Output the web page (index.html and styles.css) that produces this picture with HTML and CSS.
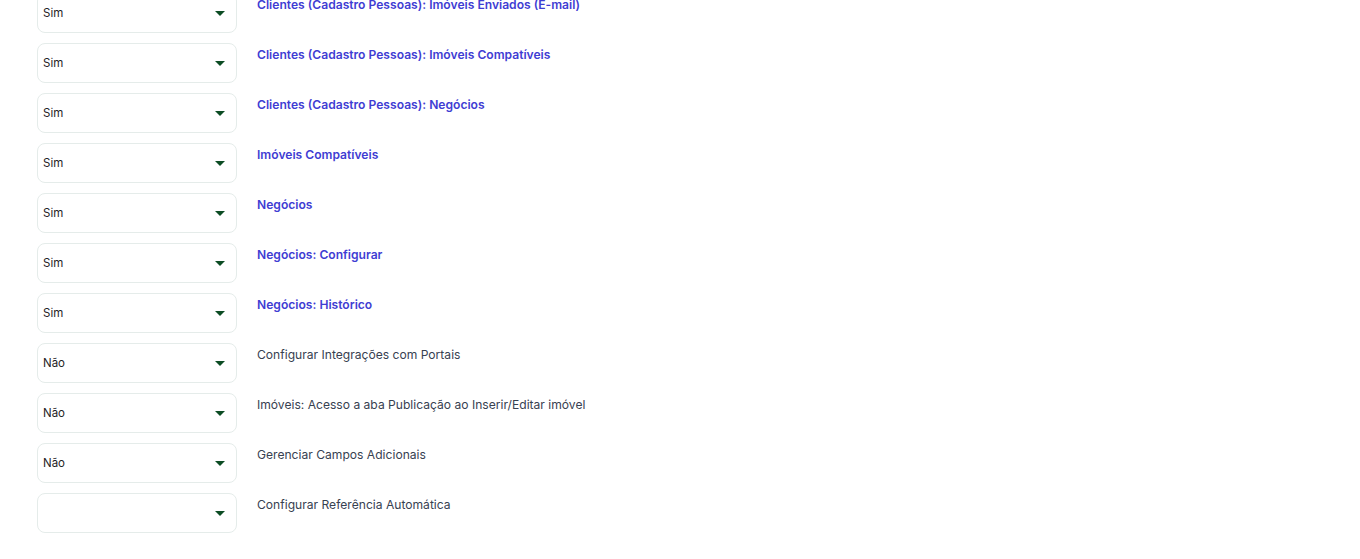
FILE: index.html
```html
<!DOCTYPE html>
<html lang="pt-BR">
<head>
<meta charset="utf-8">
<link rel="stylesheet" href="styles.css">
</head>
<body>
<div class="list">
  <div class="row"><div class="select"><span class="val">Sim</span><span class="caret"></span></div><div class="label on">Clientes (Cadastro Pessoas): Imóveis Enviados (E-mail)</div></div>
  <div class="row"><div class="select"><span class="val">Sim</span><span class="caret"></span></div><div class="label on">Clientes (Cadastro Pessoas): Imóveis Compatíveis</div></div>
  <div class="row"><div class="select"><span class="val">Sim</span><span class="caret"></span></div><div class="label on">Clientes (Cadastro Pessoas): Negócios</div></div>
  <div class="row"><div class="select"><span class="val">Sim</span><span class="caret"></span></div><div class="label on">Imóveis Compatíveis</div></div>
  <div class="row"><div class="select"><span class="val">Sim</span><span class="caret"></span></div><div class="label on">Negócios</div></div>
  <div class="row"><div class="select"><span class="val">Sim</span><span class="caret"></span></div><div class="label on">Negócios: Configurar</div></div>
  <div class="row"><div class="select"><span class="val">Sim</span><span class="caret"></span></div><div class="label on">Negócios: Histórico</div></div>
  <div class="row"><div class="select"><span class="val">Não</span><span class="caret"></span></div><div class="label">Configurar Integrações com Portais</div></div>
  <div class="row"><div class="select"><span class="val">Não</span><span class="caret"></span></div><div class="label">Imóveis: Acesso a aba Publicação ao Inserir/Editar imóvel</div></div>
  <div class="row"><div class="select"><span class="val">Não</span><span class="caret"></span></div><div class="label">Gerenciar Campos Adicionais</div></div>
  <div class="row"><div class="select"><span class="val"></span><span class="caret"></span></div><div class="label">Configurar Referência Automática</div></div>
</div>
</body>
</html>
```
FILE: styles.css
```css
html, body {
  margin: 0;
  padding: 0;
  background: #ffffff;
  font-family: Inter, "Noto Sans", sans-serif;
  overflow: hidden;
}
.list {
  display: flex;
  flex-direction: column;
  gap: 10px;
  padding-left: 37px;
  margin-top: -7px;
}
.row {
  display: flex;
  align-items: flex-start;
  gap: 20px;
}
.select {
  box-sizing: border-box;
  width: 200px;
  height: 40px;
  border: 1px solid #e5ecea;
  border-radius: 8px;
  display: flex;
  align-items: center;
  justify-content: space-between;
  padding: 0 11px 0 5px;
  flex-shrink: 0;
}
.val {
  font-size: 11.5px;
  color: #1f2326;
}
.caret {
  width: 0;
  height: 0;
  border-left: 5px solid transparent;
  border-right: 5px solid transparent;
  border-top: 5px solid #0d4d24;
}
.label {
  font-size: 12.1px;
  line-height: 20px;
  padding-top: 2px;
  color: #374151;
}
.label.on {
  color: #3f3dd3;
  font-weight: 600;
}
```
